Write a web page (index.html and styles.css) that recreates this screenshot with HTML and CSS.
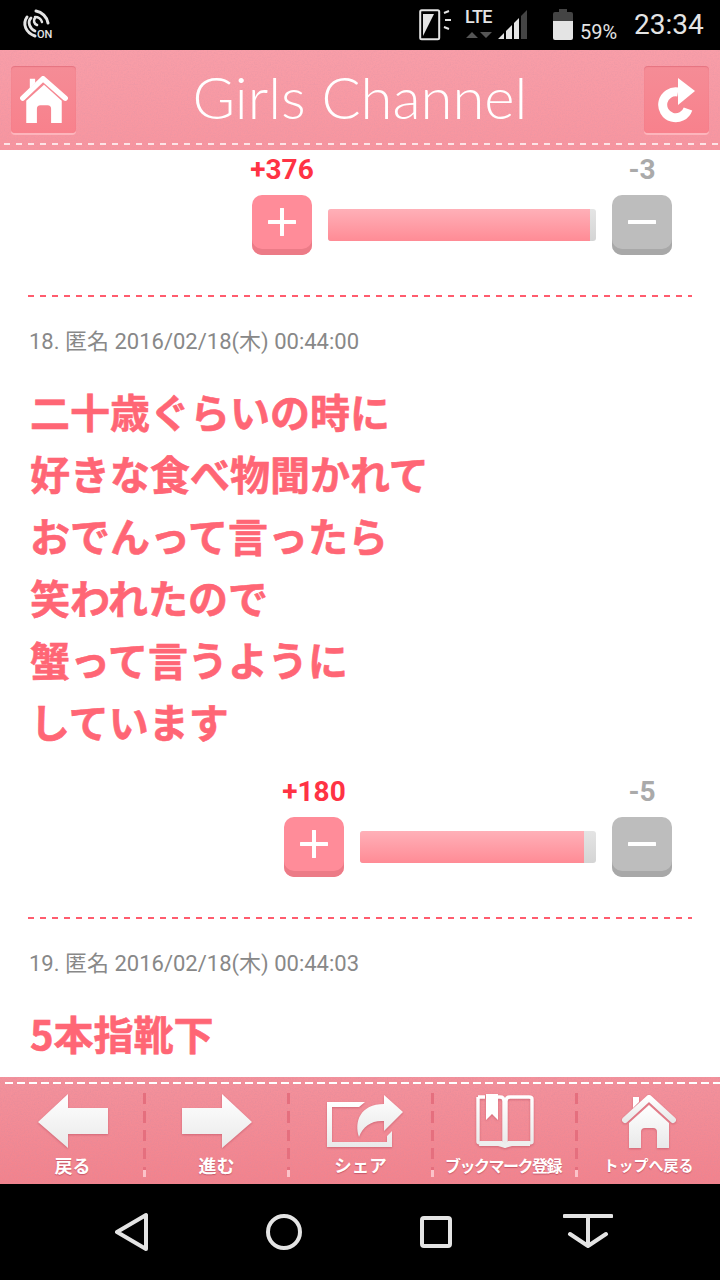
FILE: index.html
```html
<!DOCTYPE html>
<html lang="ja">
<head>
<meta charset="utf-8">
<title>Girls Channel</title>
<link rel="stylesheet" href="styles.css">
</head>
<body>
<div class="screen">
  <div class="status">
    <div class="status-left">
      <svg class="i-nfc" viewBox="0 0 30 30" width="30" height="30" fill="none" stroke="#e4e4e4" stroke-linecap="round">
        <path d="M6 8 C1 15 5 24 14 27" stroke-width="3"/>
        <path d="M10 9 C6 13 9 20 14 22" stroke-width="2.8"/>
        <path d="M14 9 C12 11 13 15 16 16" stroke-width="2.6"/>
        <path d="M15 2 C21 3 26 8 27 14" stroke-width="3"/>
        <path d="M14 8 C17 8 20 10 21 13" stroke-width="2.4"/>
      </svg>
      <span class="on-label">ON</span>
    </div>
    <div class="status-right">
      <svg class="i-rotate" viewBox="0 0 33 32" width="33" height="32">
        <rect x="1.200" y="1.200" width="19" height="29" rx="1.500" fill="none" stroke="#e4e4e4" stroke-width="2"/>
        <path d="M15 5 L4 27 V5 Z" fill="#e4e4e4"/>
        <path d="M25 4 L30 2 M26 11 H32 M25 18 L30 20" stroke="#e4e4e4" stroke-width="2" fill="none"/>
      </svg>
      <div class="lte">
        <span class="lte-text">LTE</span>
        <svg class="i-updown" viewBox="0 0 28 8" width="28" height="8">
          <path d="M1 7 L7 1 L13 7 Z M15 1 H27 L21 7 Z" fill="#555"/>
        </svg>
      </div>
      <svg class="i-signal" viewBox="0 0 29 29" width="29" height="29">
        <path d="M0 29 L6 23 V29 Z M8 29 V21 L14 15 V29 Z" fill="#e4e4e4"/>
        <path d="M16 29 V13 L21 8 V29 Z" fill="#e4e4e4"/>
        <path d="M23 29 V6 L29 0 V29 Z" fill="#444"/>
      </svg>
      <svg class="i-batt" viewBox="0 0 20 31" width="20" height="31">
        <path d="M6 0 H14 V3 H18 Q20 3 20 5 V12 H0 V5 Q0 3 2 3 H6 Z" fill="#444"/>
        <path d="M0 12 H20 V29 Q20 31 18 31 H2 Q0 31 0 29 Z" fill="#e4e4e4"/>
      </svg>
      <span class="pct">59%</span>
      <span class="clock">23:34</span>
    </div>
  </div>

  <header class="topbar">
    <div class="tbtn">
      <svg viewBox="0 0 54 53" width="48" height="47">
        <path d="M3 25 L26 3 L51 25" fill="none" stroke="#fff" stroke-width="6" stroke-linecap="round" stroke-linejoin="round"/>
        <path d="M11 3 H17 V8 L11 14 Z" fill="#fff"/>
        <path d="M27 10 L47 28 V53 H35 V37 Q35 33 31 33 H23 Q19 33 19 37 V53 H7 V28 Z" fill="#fff"/>
      </svg>
    </div>
    <h1 class="title">Girls Channel</h1>
    <div class="tbtn">
      <svg viewBox="0 0 40 46" width="40" height="46">
        <path d="M31 32 A13 13 0 1 1 21 15" fill="none" stroke="#fff" stroke-width="9"/>
        <path d="M21 1 L38 14 L21 28 Z" fill="#fff"/>
      </svg>
    </div>
  </header>

  <main class="content">
    <div class="vote">
      <div class="vcol"><span class="count plus-count">+376</span><div class="vbtn plus"><svg viewBox="0 0 28 28" width="28" height="28"><path d="M14 1 V27 M1 14 H27" stroke="#fff" stroke-width="4" stroke-linecap="round"/></svg></div></div>
      <div class="bar" style="width:268px"><div class="bar-fill" style="width:97.800%"></div></div>
      <div class="vcol"><span class="count minus-count">-3</span><div class="vbtn minus"><svg viewBox="0 0 28 28" width="28" height="28"><path d="M1 14 H27" stroke="#fff" stroke-width="4" stroke-linecap="round"/></svg></div></div>
    </div>
    <div class="divider"></div>
    <div class="meta">18. 匿名 2016/02/18(木) 00:44:00</div>
    <p class="body">二十歳ぐらいの時に<br>好きな食べ物聞かれて<br>おでんって言ったら<br>笑われたので<br>蟹って言うように<br>しています</p>
    <div class="vote vote-after">
      <div class="vcol"><span class="count plus-count">+180</span><div class="vbtn plus"><svg viewBox="0 0 28 28" width="28" height="28"><path d="M14 1 V27 M1 14 H27" stroke="#fff" stroke-width="4" stroke-linecap="round"/></svg></div></div>
      <div class="bar" style="width:236px"><div class="bar-fill" style="width:95%"></div></div>
      <div class="vcol"><span class="count minus-count">-5</span><div class="vbtn minus"><svg viewBox="0 0 28 28" width="28" height="28"><path d="M1 14 H27" stroke="#fff" stroke-width="4" stroke-linecap="round"/></svg></div></div>
    </div>
    <div class="divider"></div>
    <div class="meta">19. 匿名 2016/02/18(木) 00:44:03</div>
    <p class="body">5本指靴下</p>
  </main>

  <footer class="toolbar">
    <svg class="defs" width="0" height="0"><defs><linearGradient id="wg" x1="0" y1="0" x2="0" y2="1"><stop offset="0" stop-color="#fff"/><stop offset="1" stop-color="#e9e9e9"/></linearGradient></defs></svg>
    <div class="tool">
      <svg class="tool-icon" viewBox="0 0 70 54" width="70" height="54"><path d="M0 28 L30 0 V14 H70 V40 H30 V54 Z" fill="url(#wg)"/></svg>
      <span class="tool-label label-lg">戻る</span>
    </div>
    <div class="sep"></div>
    <div class="tool">
      <svg class="tool-icon" viewBox="0 0 70 54" width="70" height="54"><path d="M70 28 L40 0 V14 H0 V40 H40 V54 Z" fill="url(#wg)"/></svg>
      <span class="tool-label label-lg">進む</span>
    </div>
    <div class="sep"></div>
    <div class="tool">
      <svg class="tool-icon icon-share" viewBox="0 0 76 54" width="76" height="54">
        <path d="M0 8 H38 L32 13 H5 V48 H60 V42 L65 37 V53 H0 Z" fill="url(#wg)"/>
        <path d="M57 1 L76 18 L57 37 V27 C45 26 36 32 32 43 C27 28 33 10 57 10 Z" fill="url(#wg)"/>
      </svg>
      <span class="tool-label label-md">シェア</span>
    </div>
    <div class="sep"></div>
    <div class="tool">
      <svg class="tool-icon" viewBox="0 0 58 54" width="58" height="54">
        <path d="M2 3 H9 M21 3 H24 Q28 3 28 7 V50 M30 50 V7 Q30 3 34 3 H53 Q56 3 56 5 V48 Q56 49 53 49 H36 Q32 49 29 52 Q26 49 22 49 H5 Q2 49 2 48 V3" fill="none" stroke="url(#wg)" stroke-width="3.400" stroke-linejoin="round"/>
        <path d="M4 47 H26 L29 50 L32 47 H54 V52 H36 L29 54 L22 52 H3 Z" fill="#eee"/>
        <path d="M10 0 H22 V26 L16 20 L10 26 Z" fill="#fff"/>
      </svg>
      <span class="tool-label label-tight">ブックマーク登録</span>
    </div>
    <div class="sep"></div>
    <div class="tool">
      <svg class="tool-icon" viewBox="0 0 54 54" width="54" height="54">
        <path d="M3 26 L27 4 L51 26" fill="none" stroke="url(#wg)" stroke-width="6" stroke-linecap="round" stroke-linejoin="round"/>
        <path d="M11 3 H17 V8 L11 14 Z" fill="#fff"/>
        <path d="M27 11 L47 29 V54 H35 V38 Q35 34 31 34 H23 Q19 34 19 38 V54 H7 V29 Z" fill="url(#wg)"/>
      </svg>
      <span class="tool-label label-sm">トップへ戻る</span>
    </div>
  </footer>

  <nav class="navbar">
    <div class="navcell"><svg viewBox="0 0 34 40" width="34" height="40"><path d="M2 20 L31 3 V37 Z" fill="none" stroke="#e4e4e4" stroke-width="4" stroke-linejoin="round"/></svg></div>
    <div class="navcell"><svg viewBox="0 0 36 36" width="36" height="36"><circle cx="18" cy="18" r="16" fill="none" stroke="#e4e4e4" stroke-width="4"/></svg></div>
    <div class="navcell"><svg viewBox="0 0 32 32" width="32" height="32"><rect x="2" y="2" width="28" height="28" rx="2" fill="none" stroke="#e4e4e4" stroke-width="4"/></svg></div>
    <div class="navcell"><svg viewBox="0 0 50 36" width="50" height="36"><path d="M1.500 2 H48.500 M25 2 V32 M7 20 L25 32 L43 20" fill="none" stroke="#e4e4e4" stroke-width="4" stroke-linecap="round" stroke-linejoin="round"/></svg></div>
  </nav>
</div>
</body>
</html>
```

FILE: styles.css
```css
* { box-sizing: border-box; }
html, body { margin: 0; padding: 0; }
body { background: #fff; font-family: Roboto, "Noto Sans CJK JP", sans-serif; }
.screen { width: 720px; height: 1280px; display: flex; flex-direction: column; overflow: hidden; }

/* status bar */
.status { height: 50px; flex: none; background: #000; display: flex; justify-content: space-between; color: #e4e4e4; }
.status-left { display: flex; align-items: flex-start; padding: 9px 0 0 21px; }
.i-nfc { flex: none; }
.on-label { font-size: 11px; font-weight: 500; margin: 19px 0 0 -14px; }
.status-right { display: flex; align-items: flex-start; padding: 8px 16px 0 0; }
.i-rotate { margin: 1px 0 0; }
.lte { display: flex; flex-direction: column; align-items: center; margin-left: 12px; width: 29px; }
.lte-text { font-size: 18px; line-height: 18px; font-weight: 500; letter-spacing: -0.6px; }
.i-updown { margin-top: 5px; }
.i-signal { margin: 2px 0 0 5px; }
.i-batt { margin: 1px 0 0 26px; }
.pct { font-size: 20px; line-height: 22px; margin: 13px 0 0 7px; width: 38px; white-space: nowrap; }
.clock { font-size: 28px; line-height: 34px; margin-left: 16px; width: 70px; white-space: nowrap; }

/* header */
.topbar {
  height: 100px; flex: none; display: flex; align-items: flex-start; justify-content: space-between; padding: 16px 11px 0;
  background:
    repeating-linear-gradient(90deg, #fde3e6 0 6px, transparent 6px 12px) 4px 93px / 100% 2px no-repeat,
    url("data:image/svg+xml,%3Csvg xmlns='http://www.w3.org/2000/svg' width='180' height='180'%3E%3Cfilter id='n'%3E%3CfeTurbulence type='fractalNoise' baseFrequency='.7' numOctaves='2'/%3E%3CfeColorMatrix values='0 0 0 0 .75 0 0 0 0 .3 0 0 0 0 .38 .6 .6 0 0 -.48'/%3E%3C/filter%3E%3Crect width='180' height='180' filter='url(%23n)'/%3E%3C/svg%3E"),
    linear-gradient(#f99ea8, #f8959f);
}
.tbtn {
  width: 65px; height: 67px; display: flex; align-items: center; justify-content: center; border-radius: 4px;
  background: linear-gradient(#f58c96, #f8818c);
  box-shadow: inset 0 1px 1px rgba(200,70,90,.35), 0 2px 0 #fdb5bc;
}
.title { margin: 0; font-family: Lato, sans-serif; font-weight: 300; font-size: 58px; line-height: 62px; color: #fff; }

/* content */
.content { flex: 1; min-height: 0; overflow: hidden; background: #fff; padding-top: 5px; }
.vote { display: flex; justify-content: flex-end; gap: 16px; padding-right: 48px; }
.vote-after { margin-top: 25px; }
.vcol { width: 60px; flex: none; display: flex; flex-direction: column; align-items: center; }
.count { font-size: 28px; line-height: 30px; font-weight: 700; white-space: nowrap; margin-bottom: 10px; }
.plus-count { color: #ff3344; }
.minus-count { color: #aaa; }
.vbtn { width: 60px; height: 60px; border-radius: 10px; display: flex; align-items: center; justify-content: center; padding-bottom: 6px; }
.plus { background: #ff8c99; box-shadow: inset 0 -6px 0 #ec7b87; }
.minus { background: #bdbdbd; box-shadow: inset 0 -6px 0 #a8a8a8; }
.bar { height: 32px; align-self: flex-end; margin-bottom: 14px; border-radius: 3px; background: linear-gradient(#e4e4e4, #d4d4d4); overflow: hidden; }
.bar-fill { height: 100%; background: linear-gradient(#ffb0b8, #ff8b95); }
.divider { height: 2px; margin: 40px 28px 0; background: repeating-linear-gradient(90deg, #ff5c6e 0 6px, transparent 6px 12px); }
.meta { margin: 30px 29px 0; font-size: 22px; line-height: 30px; color: #888; }
.body { margin: 23px 30px 0; font-family: "Noto Sans CJK JP", sans-serif; font-size: 40px; line-height: 62px; font-weight: 700; color: #ff6675; -webkit-text-stroke: 0.6px #ff6675; }

/* toolbar */
.toolbar {
  height: 107px; flex: none; display: flex; padding: 0 1px 0 2px;
  background:
    repeating-linear-gradient(90deg, #fff 0 8px, transparent 8px 12px) 5px 5px / 100% 2px no-repeat,
    url("data:image/svg+xml,%3Csvg xmlns='http://www.w3.org/2000/svg' width='180' height='180'%3E%3Cfilter id='n'%3E%3CfeTurbulence type='fractalNoise' baseFrequency='.7' numOctaves='2'/%3E%3CfeColorMatrix values='0 0 0 0 .7 0 0 0 0 .25 0 0 0 0 .33 .6 .6 0 0 -.48'/%3E%3C/filter%3E%3Crect width='180' height='180' filter='url(%23n)'/%3E%3C/svg%3E"),
    linear-gradient(#f4929c, #f3828c);
}
.defs { position: absolute; }
.tool { flex: 1; min-width: 0; display: flex; flex-direction: column; align-items: center; padding-top: 17px; }
.tool-icon { flex: none; filter: drop-shadow(0 1px 1px rgba(170,60,80,.45)); }
.icon-share { margin-left: 8px; }
.tool-label {
  font-family: "Noto Sans CJK JP", sans-serif; font-weight: 700; font-size: 16px; line-height: 24px; margin-top: 5px; color: #fff; white-space: nowrap;
  text-shadow: 0 1px 1px rgba(170,60,80,.6);
}
.label-lg { font-size: 18px; }
.label-md { font-size: 17.500px; }
.label-tight { letter-spacing: -1.500px; margin-right: 3px; }
.label-sm { font-size: 15px; }
.sep {
  width: 3px; flex: none; height: 84px; margin-top: 16px;
  background:
    linear-gradient(#fbc3c9, #fbc3c9) 0 100% / 100% 7px no-repeat,
    repeating-linear-gradient(180deg, #e56f7e 0 11px, transparent 11px 18.500px);
}

/* android nav */
.navbar { height: 96px; flex: none; background: #000; display: grid; grid-template-columns: repeat(4, 152px); padding-left: 56px; }
.navcell { display: flex; align-items: center; justify-content: center; }
```
